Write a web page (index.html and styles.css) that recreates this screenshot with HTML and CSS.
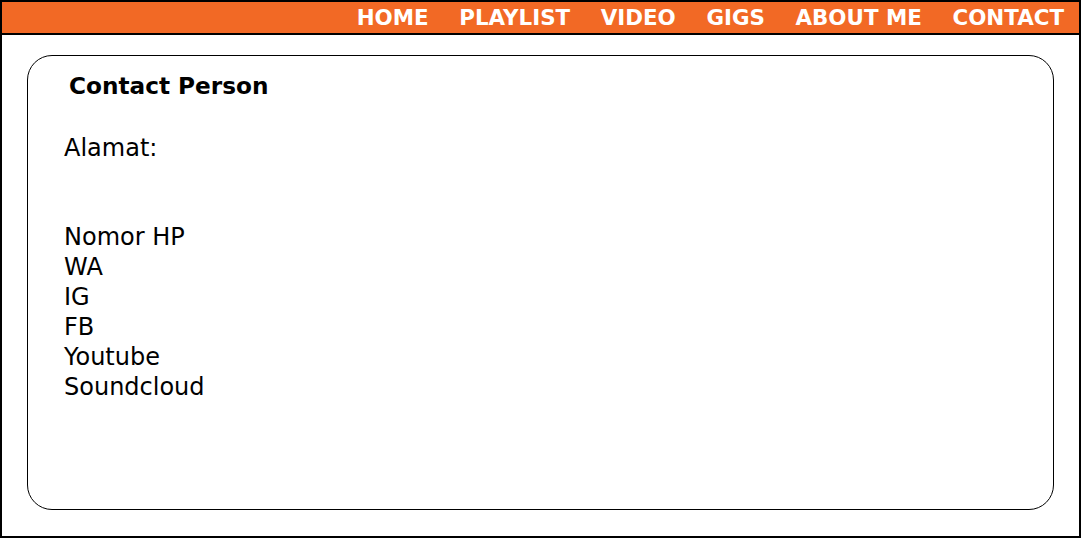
FILE: index.html
```html
<!DOCTYPE html>
<html>
<head>
<meta charset="utf-8">
<link rel="stylesheet" href="styles.css">
</head>
<body>
<div class="page">
  <header class="topbar">
    <nav class="nav">
      <a class="nav-link" href="#">HOME</a>
      <a class="nav-link" href="#">PLAYLIST</a>
      <a class="nav-link" href="#">VIDEO</a>
      <a class="nav-link" href="#">GIGS</a>
      <a class="nav-link" href="#">ABOUT ME</a>
      <a class="nav-link" href="#">CONTACT</a>
    </nav>
  </header>
  <main class="content">
    <section class="card">
      <h2 class="card-title">Contact Person</h2>
      <p class="card-line">Alamat:</p>
      <div class="spacer"></div>
      <ul class="contact-list">
        <li>Nomor HP</li>
        <li>WA</li>
        <li>IG</li>
        <li>FB</li>
        <li>Youtube</li>
        <li>Soundcloud</li>
      </ul>
    </section>
  </main>
</div>
</body>
</html>
```

FILE: styles.css
```css
html, body {
  margin: 0;
  padding: 0;
  background: #ffffff;
}

body {
  font-family: "DejaVu Sans", Verdana, sans-serif;
  color: #000;
}

.page {
  box-sizing: border-box;
  width: 1081px;
  height: 538px;
  border: 2px solid #000;
  display: flex;
  flex-direction: column;
}

.topbar {
  height: 31px;
  background: #f26925;
  border-bottom: 2px solid #000;
  display: flex;
  justify-content: flex-end;
  align-items: center;
}

.nav {
  display: flex;
  gap: 30.6px;
  padding-right: 15px;
}

.nav-link {
  color: #fff;
  text-decoration: none;
  font-weight: bold;
  font-size: 21.4px;
  line-height: 24px;
}

.content {
  flex: 1;
  padding: 20px 25px 26px 25px;
  display: flex;
}

.card {
  flex: 1;
  border: 1px solid #000;
  border-radius: 25px;
  padding: 15.5px 0 0 36px;
}

.card-title {
  margin: 0 0 34.5px 5px;
  font-size: 23.2px;
  font-weight: bold;
  line-height: 27px;
}

.card-line {
  margin: 0;
  font-size: 24px;
  line-height: 30px;
}

.spacer {
  height: 59px;
}

.contact-list {
  list-style: none;
  margin: 0;
  padding: 0;
  font-size: 24px;
  line-height: 30px;
}
```
